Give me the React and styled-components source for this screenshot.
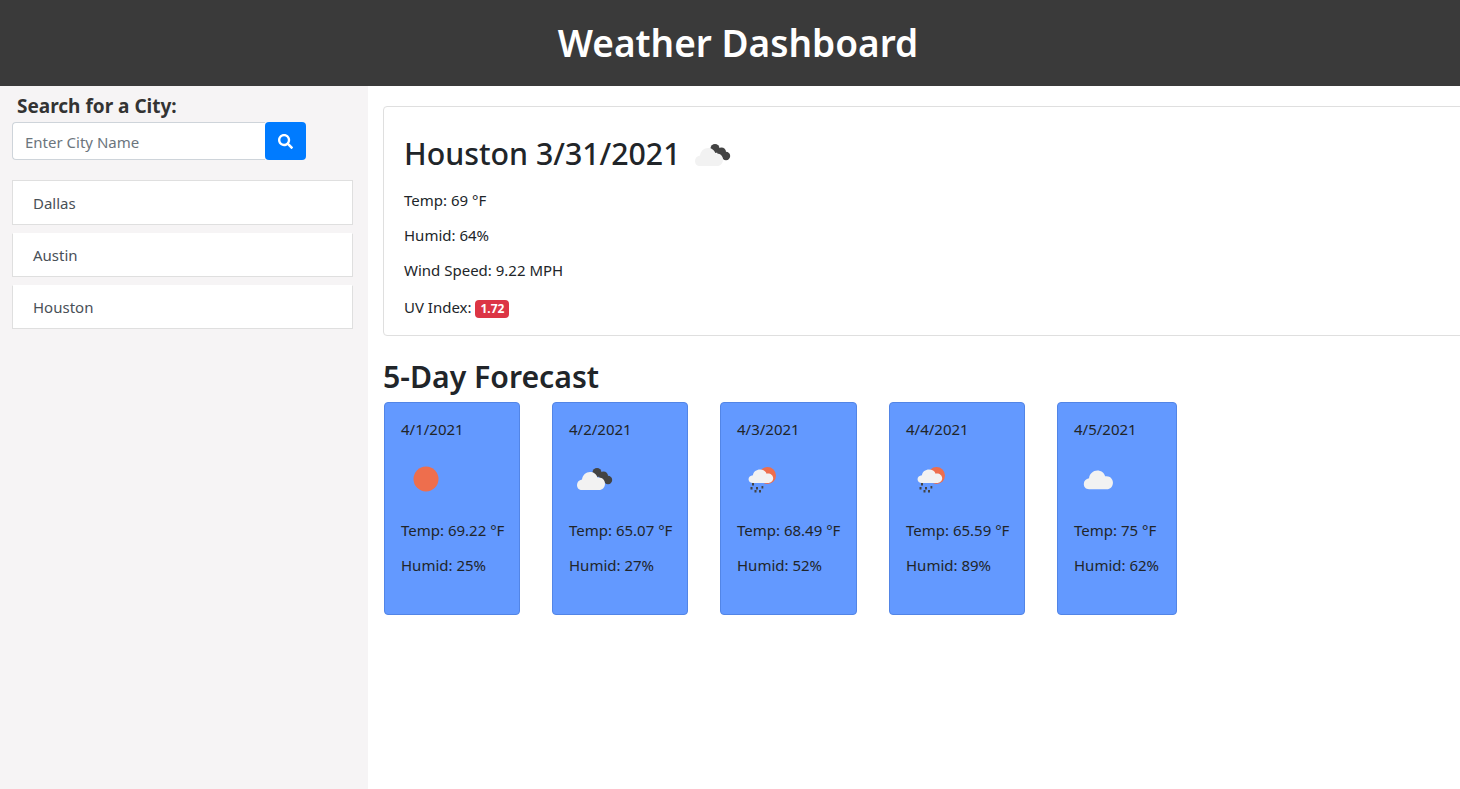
import React from "react";
import styled, { createGlobalStyle } from "styled-components";
import { FaSearch } from "react-icons/fa";

const GlobalStyle = createGlobalStyle`
  * {
    box-sizing: border-box;
  }
  html, body {
    margin: 0;
    padding: 0;
    overflow: hidden;
    background: #fff;
    color: #212529;
    font-family: "Noto Sans", "Open Sans", sans-serif;
    font-size: 15px;
    line-height: 21px;
  }
`;

const cities = ["Dallas", "Austin", "Houston"];

const forecast = [
  { date: "4/1/2021", icon: "sun", temp: "69.22", humid: 25, width: 136 },
  { date: "4/2/2021", icon: "broken", temp: "65.07", humid: 27, width: 136 },
  { date: "4/3/2021", icon: "rain", temp: "68.49", humid: 52, width: 137 },
  { date: "4/4/2021", icon: "rain", temp: "65.59", humid: 89, width: 136 },
  { date: "4/5/2021", icon: "cloud", temp: "75", humid: 62, width: 120 },
];

// same outline as the openweathermap cloud, moved around with transform
const CLOUD =
  "M13 36c-3 0-5-2-5-5 0-3 2-5 5-5.5C13.500 21 17 18 21 18c3.500 0 6.500 2 7.500 5.500 .5-.1 1-.1 1.500-.1 3.500 0 6 2.800 6 6.300 0 3.500-2.500 6.300-6 6.300z";

const WeatherIcon = ({ type }) => {
  return (
    <svg width="50" height="50" viewBox="0 0 50 50">
      {type === "sun" && <circle cx="25" cy="25" r="12.500" fill="#ee6e4d" />}
      {type === "broken" && (
        <>
          <circle cx="28" cy="18.500" r="4.500" fill="#434343" />
          <circle cx="34.500" cy="22" r="4.500" fill="#434343" />
          <circle cx="39" cy="26" r="4.200" fill="#434343" />
          <path d={CLOUD} fill="#f2f2f2" />
        </>
      )}
      {type === "cloud" && (
        <path
          d={CLOUD}
          fill="#f2f2f2"
          transform="translate(1.500 -2.200) scale(1.040 1.040)"
        />
      )}
      {type === "rain" && (
        <>
          <circle cx="30.500" cy="21.500" r="8.500" fill="#ee6e4d" />
          <path
            d={CLOUD}
            fill="#f2f2f2"
            transform="translate(4.500 2) scale(0.88 0.75)"
          />
          <g fill="#434343">
            <rect x="15" y="29" width="2" height="2.500" />
            <rect x="13.500" y="33" width="2" height="2.500" />
            <rect x="19" y="33" width="2" height="2.500" />
            <rect x="24.500" y="32" width="1.800" height="2.500" />
            <rect x="17.500" y="36" width="2" height="2.500" />
            <rect x="22" y="36" width="2" height="2.500" />
          </g>
        </>
      )}
    </svg>
  );
};

const App = () => {
  return (
    <Page>
      <GlobalStyle />
      <Header>Weather Dashboard</Header>
      <Body>
        <Sidebar>
          <SearchLabel>Search for a City:</SearchLabel>
          <SearchRow>
            <SearchInput placeholder="Enter City Name" />
            <SearchButton aria-label="Search">
              <FaSearch size={15} />
            </SearchButton>
          </SearchRow>
          <CityList>
            {cities.map((city) => (
              <CityItem key={city}>{city}</CityItem>
            ))}
          </CityList>
        </Sidebar>
        <Main>
          <CurrentCard>
            <CityTitle>
              <span>Houston 3/31/2021</span>
              <WeatherIcon type="broken" />
            </CityTitle>
            <Stat>Temp: 69 °F</Stat>
            <Stat>Humid: 64%</Stat>
            <Stat>Wind Speed: 9.22 MPH</Stat>
            <UvStat>
              UV Index: <Badge>1.72</Badge>
            </UvStat>
          </CurrentCard>
          <ForecastTitle>5-Day Forecast</ForecastTitle>
          <ForecastRow>
            {forecast.map((day) => (
              <DayCard key={day.date} $width={day.width}>
                <span>{day.date}</span>
                <DayIcon>
                  <WeatherIcon type={day.icon} />
                </DayIcon>
                <span>Temp: {day.temp} °F</span>
                <span>Humid: {day.humid}%</span>
              </DayCard>
            ))}
          </ForecastRow>
        </Main>
      </Body>
    </Page>
  );
};

const Page = styled.div`
  height: 100vh;
  display: flex;
  flex-direction: column;
`;

const Header = styled.header`
  height: 86px;
  flex: none;
  background: #3a3a3a;
  color: #fff;
  display: flex;
  align-items: center;
  justify-content: center;
  padding: 0 0 1px 16px;
  font-size: 37px;
  font-weight: 600;
`;

const Body = styled.div`
  flex: 1;
  display: flex;
  min-height: 0;
`;

const Sidebar = styled.aside`
  width: 368px;
  flex: none;
  background: #f6f4f5;
  padding: 8px 15px 0 12px;
`;

const SearchLabel = styled.div`
  margin-left: 5px;
  font-size: 19px;
  line-height: 24px;
  font-weight: 700;
  color: #333;
`;

const SearchRow = styled.div`
  display: flex;
  margin-top: 4px;
`;

const SearchInput = styled.input`
  width: 253px;
  height: 38px;
  padding: 6px 12px 5px;
  border: 1px solid #ced4da;
  border-right: 0;
  border-radius: 4px 0 0 4px;
  background: #fff;
  font-family: inherit;
  font-size: 15px;
  outline: none;
  &::placeholder {
    color: #6c757d;
    opacity: 1;
  }
`;

const SearchButton = styled.button`
  width: 41px;
  height: 38px;
  padding: 0;
  border: 0;
  border-radius: 4px;
  background: #007bff;
  color: #fff;
  display: flex;
  align-items: center;
  justify-content: center;
`;

const CityList = styled.div`
  margin-top: 20px;
  display: flex;
  flex-direction: column;
  gap: 8px;
`;

const CityItem = styled.div`
  height: 44px;
  padding-left: 20px;
  background: #fff;
  border: 1px solid #dfdfdf;
  border-top-color: #fff;
  display: flex;
  align-items: center;
  color: #495057;
  &:first-child {
    height: 45px;
    padding-top: 1px;
    border-top-color: #dfdfdf;
  }
`;

const Main = styled.main`
  flex: 1;
  min-width: 0;
  padding: 20px 0 0 15px;
`;

const CurrentCard = styled.section`
  width: 1200px;
  height: 230px;
  padding: 20px;
  border: 1px solid #dfdfdf;
  border-radius: 4px;
`;

const CityTitle = styled.h2`
  margin: 0 0 10px;
  height: 53px;
  display: flex;
  align-items: flex-end;
  gap: 6px;
  font-size: 30.300px;
  line-height: 46px;
  font-weight: 500;

  span {
    padding-bottom: 3px;
  }
`;

const Stat = styled.p`
  margin: 0 0 14px;
`;

const UvStat = styled(Stat)`
  margin: 0;
  padding-top: 2px;
`;

const Badge = styled.span`
  display: inline-block;
  height: 18px;
  padding: 0 5px;
  border-radius: 4px;
  background: #dc3545;
  color: #fff;
  font-size: 12px;
  line-height: 18px;
  font-weight: 700;
`;

const ForecastTitle = styled.h2`
  margin: 22px 0 6px;
  font-size: 30.200px;
  line-height: 38px;
  font-weight: 600;
`;

const ForecastRow = styled.div`
  display: flex;
  gap: 32px;
  margin-left: 1px;
`;

const DayCard = styled.article`
  width: ${(props) => props.$width}px;
  height: 213px;
  padding: 16px;
  background: #6399ff;
  border: 1px solid #5285e6;
  border-radius: 4px;
  display: flex;
  flex-direction: column;
  gap: 14px;
  white-space: nowrap;
`;

const DayIcon = styled.div`
  height: 50px;
  margin-bottom: 2px;
`;

export default App;
